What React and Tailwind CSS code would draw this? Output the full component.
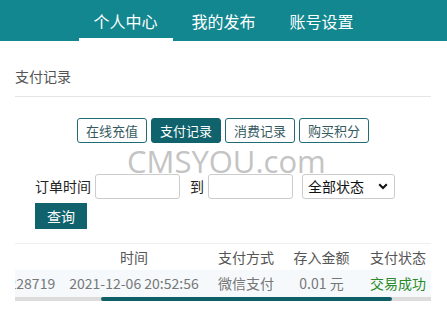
import React from "react";

const font = "font-['Microsoft_YaHei','Noto_Sans_CJK_SC',sans-serif]";

function Nav() {
  const items = ["个人中心", "我的发布", "账号设置"];
  return (
    <div className="h-[41px] bg-[#13878f] flex justify-center gap-[4px]">
      {items.map((t, i) => (
        <div
          key={t}
          className={`w-[94px] h-[41px] flex items-center justify-center text-[16px] text-white ${
            i === 0 ? "border-b-[3px] border-white pt-[3px]" : ""
          }`}
        >
          {t}
        </div>
      ))}
    </div>
  );
}

function Tabs() {
  const items = ["在线充值", "支付记录", "消费记录", "购买积分"];
  return (
    <div className="flex justify-center gap-[4px] mt-[21px]">
      {items.map((t, i) => (
        <div
          key={t}
          className={`w-[70px] h-[25px] flex items-center justify-center rounded-[3px] text-[13px] border ${
            i === 1
              ? "bg-[#10636d] border-[#10636d] text-white"
              : "bg-white border-[#1f6c75] text-[#355a5f]"
          }`}
        >
          {t}
        </div>
      ))}
    </div>
  );
}

function Form() {
  return (
    <div className="pl-[20px] mt-[31px]">
      <div className="flex items-center h-[25px]">
        <span className="text-[14px] text-[#222]">订单时间</span>
        <div className="ml-[4px] w-[85px] h-[25px] border border-[#ccc] rounded-[3px] bg-white" />
        <span className="ml-[10px] text-[14px] text-[#222]">到</span>
        <div className="ml-[4px] w-[85px] h-[25px] border border-[#ccc] rounded-[3px] bg-white" />
        <div className="ml-[9px] w-[93px] h-[25px] border border-[#ccc] rounded-[3px] bg-white flex items-center justify-between pl-[5px] pr-[6px]">
          <span className="text-[14px] text-[#111]">全部状态</span>
          <svg width="10" height="7" viewBox="0 0 10 7">
            <path d="M1.2 1.2 L5 5 L8.8 1.2" fill="none" stroke="#111" strokeWidth="2" />
          </svg>
        </div>
      </div>
      <div className="mt-[4px] w-[52px] h-[26px] bg-[#10636d] text-white text-[14px] flex items-center justify-center">
        查询
      </div>
    </div>
  );
}

function Table() {
  const cols = [168, 148, 76, 75, 78, 50];
  const head = ["订单号", "时间", "支付方式", "存入金额", "支付状态", ""];
  const row = ["202112062052561228719", "2021-12-06 20:52:56", "微信支付", "0.01 元", "交易成功", ""];
  return (
    <div className="mt-[14px] w-[416px]">
      <div className="w-[416px] overflow-hidden border-t border-[#eeeeee]">
        <div className="ml-[-123px] w-[595px]">
          <div className="flex h-[26px] items-center bg-white">
            {head.map((h, i) => (
              <div
                key={i}
                style={{ width: cols[i] }}
                className="shrink-0 text-[14px] text-[#555] whitespace-nowrap text-center"
              >
                {h}
              </div>
            ))}
          </div>
          <div className="flex h-[27px] items-center bg-[#f5f9fb]">
            {row.map((c, i) => (
              <div
                key={i}
                style={{ width: cols[i] }}
                className={`shrink-0 text-[14px] whitespace-nowrap ${
                  i === 4 ? "text-[#2a8a2a]" : "text-[#777]"
                } ${i === 0 ? "text-right pr-[10px]" : "text-center"}`}
              >
                {c}
              </div>
            ))}
          </div>
        </div>
      </div>
      <div className="h-[4px] bg-[#dcdcdc] relative">
        <div className="absolute left-[86px] w-[291px] top-0 h-[4px] rounded-full bg-[#0f5f69]" />
      </div>
    </div>
  );
}

export default function App() {
  return (
    <div className={`w-[447px] h-[316px] bg-white relative overflow-hidden ${font}`}>
      <Nav />
      <div className="px-[15px] pr-[16px]">
        <div className="mt-[25px] text-[14px] leading-[20px] text-[#555]">支付记录</div>
        <div className="mt-[10px] border-b border-[#e5e5e5]" />
        <Tabs />
        <Form />
        <Table />
      </div>
      <div className="absolute left-[127px] top-[148px] text-[31px] leading-[26px] text-[#c4c4c4] font-['Open_Sans',sans-serif] pointer-events-none">
        CMSYOU.com
      </div>
    </div>
  );
}
